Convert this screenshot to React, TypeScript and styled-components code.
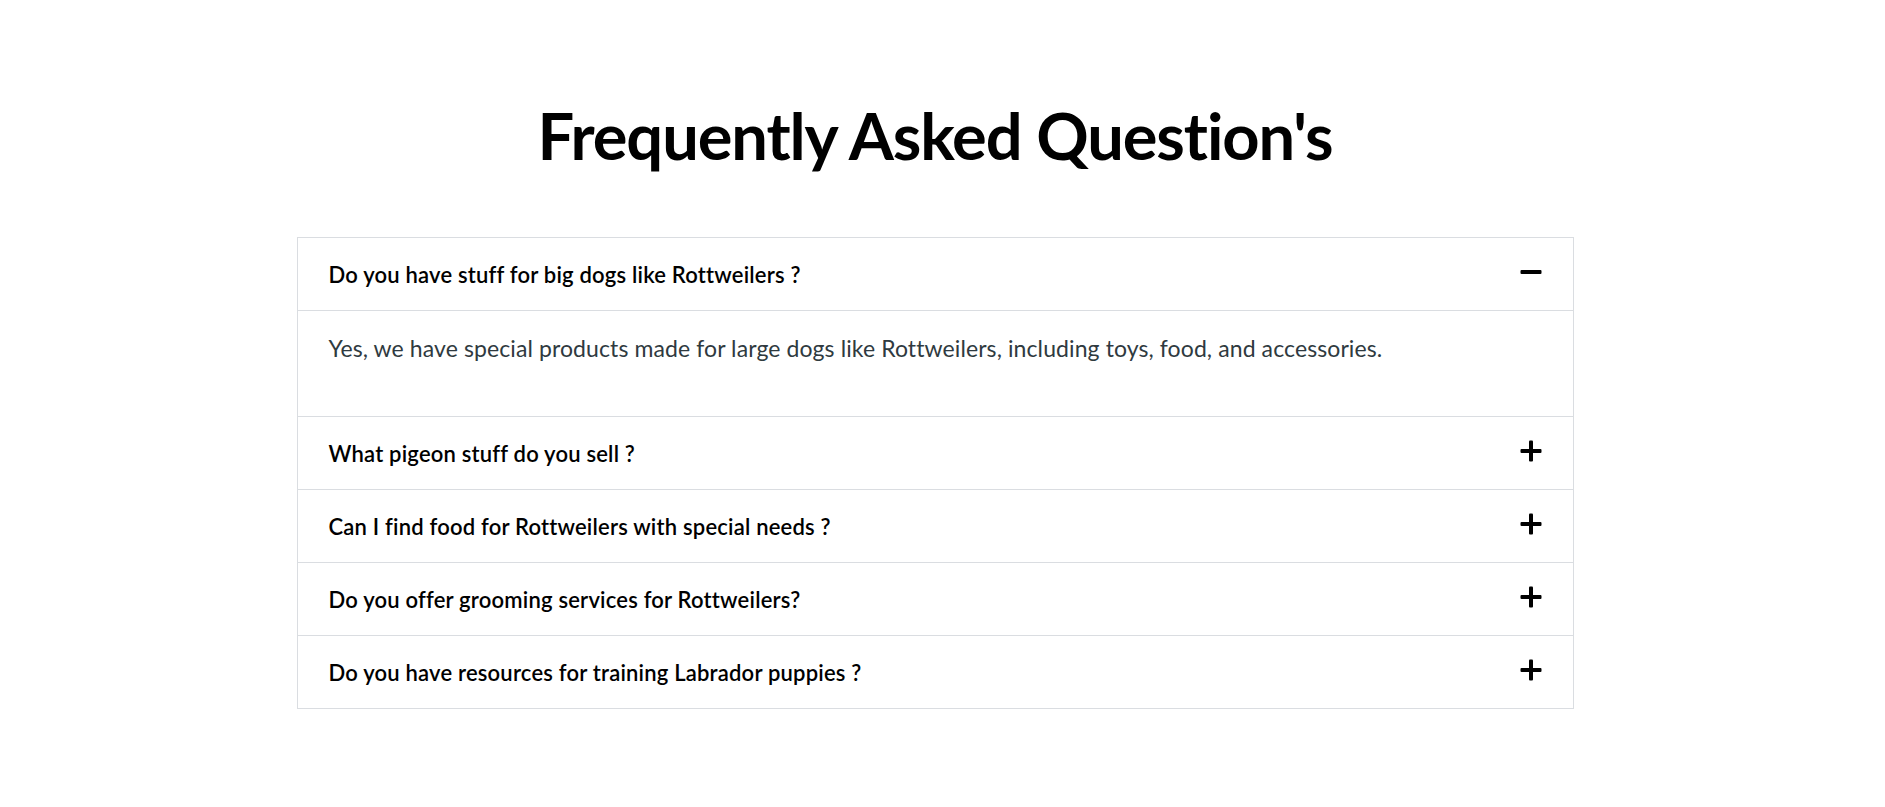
import React, { useState } from 'react';
import styled, { createGlobalStyle } from 'styled-components';

const GlobalStyle = createGlobalStyle`
  html, body {
    margin: 0;
    padding: 0;
    background: #ffffff;
  }
  body {
    font-family: Lato, "Open Sans", sans-serif;
    -webkit-font-smoothing: antialiased;
  }
`;

const StyledPage = styled.main`
  width: calc(100% - 15px);
  padding: 96px 0 80px;
  box-sizing: border-box;
`;

const StyledTitle = styled.h2`
  margin: 0 0 63px;
  text-align: center;
  font-size: 65px;
  line-height: 1.2;
  font-weight: 700;
  letter-spacing: -1.1px;
  color: #000;
`;

const StyledList = styled.div`
  width: 1277px;
  margin: 0 auto;
  border: 1px solid #dadde1;
  box-sizing: border-box;
`;

const StyledItem = styled.div`
  border-bottom: 1px solid #dadde1;

  &:last-child {
    border-bottom: none;
  }
`;

const StyledQuestion = styled.button<{ $open: boolean }>`
  display: flex;
  align-items: center;
  justify-content: space-between;
  width: calc(100% - 62px);
  height: 72px;
  padding: 0 31px;
  border: none;
  border-bottom: ${({ $open }) => ($open ? '1px solid #dadde1' : 'none')};
  background: transparent;
  font-family: inherit;
  font-size: 22px;
  font-weight: 600;
  letter-spacing: 0.2px;
  color: #000;
  text-align: left;
  cursor: pointer;
  box-sizing: content-box;
`;

const StyledIcon = styled.svg`
  flex-shrink: 0;
  margin-bottom: 4px;
`;

const StyledAnswer = styled.p`
  margin: 0;
  padding: 21px 31px 51px;
  font-size: 23px;
  line-height: 33px;
  letter-spacing: 0.1px;
  color: #2f3a40;
`;

const faqs = [
  {
    q: 'Do you have stuff for big dogs like Rottweilers ?',
    a: 'Yes, we have special products made for large dogs like Rottweilers, including toys, food, and accessories.',
  },
  {
    q: 'What pigeon stuff do you sell ?',
    a: 'We sell pigeon feed, grit, lofts, feeders and drinkers, plus vitamins and care products.',
  },
  {
    q: 'Can I find food for Rottweilers with special needs ?',
    a: 'Yes, we stock grain-free, sensitive stomach and joint-support formulas for Rottweilers.',
  },
  {
    q: 'Do you offer grooming services for Rottweilers?',
    a: 'Yes, our grooming team handles bathing, brushing, nail trimming and ear cleaning.',
  },
  {
    q: 'Do you have resources for training Labrador puppies ?',
    a: 'Yes, we have training guides, treats, clickers and leashes made for Labrador puppies.',
  },
];

const ToggleIcon = ({ open }: { open: boolean }) => (
  <StyledIcon width="22" height="22" viewBox="0 0 22 22">
    <rect x="0.5" y="9" width="21" height="4" rx="1" fill="#000" />
    {!open && <rect x="9" y="0.5" width="4" height="21" rx="1" fill="#000" />}
  </StyledIcon>
);

const App = () => {
  const [openIndex, setOpenIndex] = useState<number | null>(0);

  return (
    <>
      <GlobalStyle />
      <StyledPage>
        <StyledTitle>Frequently Asked Question's</StyledTitle>
        <StyledList>
          {faqs.map((item, i) => {
            const open = openIndex === i;
            return (
              <StyledItem key={item.q}>
                <StyledQuestion $open={open} onClick={() => setOpenIndex(open ? null : i)}>
                  <span>{item.q}</span>
                  <ToggleIcon open={open} />
                </StyledQuestion>
                {open && <StyledAnswer>{item.a}</StyledAnswer>}
              </StyledItem>
            );
          })}
        </StyledList>
      </StyledPage>
    </>
  );
};

export default App;
